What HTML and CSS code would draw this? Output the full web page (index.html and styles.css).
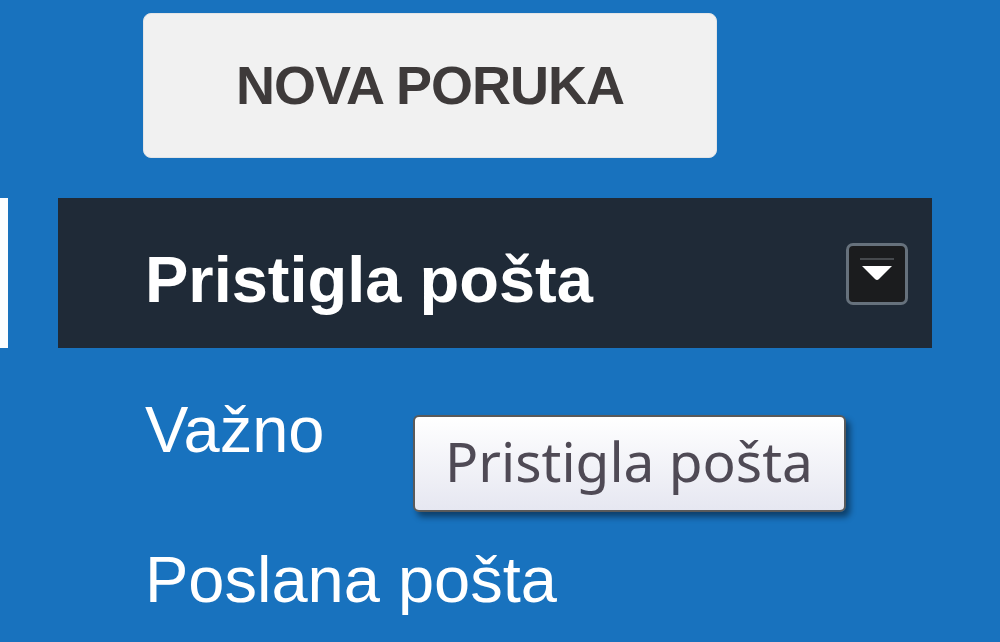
FILE: index.html
```html
<!DOCTYPE html>
<html lang="hr">
<head>
  <meta charset="UTF-8" />
  <title>Pošta</title>
  <link rel="stylesheet" href="styles.css">
</head>
<body>

  <div class="rail"></div>

  <div class="sidebar">
    <div class="compose">
      <button type="button" class="compose-btn">NOVA PORUKA</button>
    </div>

    <ul class="folders">
      <li class="folder active">
        <span class="folder-name">Pristigla pošta</span>
        <span class="folder-menu">
          <svg width="36" height="26" viewBox="0 0 36 26">
            <line x1="1" y1="2" x2="35" y2="2" stroke="#46494d" stroke-width="2" />
            <path d="M3 9 L33 9 L20 22 Q18 24 16 22 Z" fill="#fff" />
          </svg>
        </span>
      </li>
      <li class="folder">
        <span class="folder-name">Važno</span>
      </li>
      <li class="folder">
        <span class="folder-name">Poslana pošta</span>
      </li>
    </ul>

    <!-- hover tooltip over the inbox link -->
    <div class="tooltip">Pristigla pošta</div>
  </div>

</body>
</html>
```

FILE: styles.css
```css
html, body {
  margin: 0;
  height: 100%;
}
body {
  background: #1872be;
  font-family: "Liberation Sans", Arial, sans-serif;
  display: flex;
  align-items: flex-start;
  overflow: hidden;
}
.rail {
  width: 8px;
  height: 150px;
  margin-top: 198px;
  background: #fbfdff;
}
.sidebar {
  position: relative;
  margin-left: 50px;
  width: 874px;
}
.compose {
  padding: 13px 0 0 85px;
}
.compose-btn {
  width: 574px;
  height: 145px;
  background: #f1f1f1;
  border: 1px solid #e2e4e6;
  border-radius: 8px;
  font-family: "Liberation Sans", Arial, sans-serif;
  font-weight: bold;
  font-size: 54px;
  letter-spacing: -1px;
  color: #3e3a3a;
  padding: 0 0 2px;
}
.folders {
  list-style: none;
  margin: 40px 0 0;
  padding: 0;
}
.folder {
  height: 150px;
  box-sizing: border-box;
  padding: 14px 24px 0 87px;
  line-height: 136px;
  font-size: 65px;
  color: #ffffff;
  display: flex;
  justify-content: space-between;
}
.folder.active {
  background: #1f2a37;
  font-weight: bold;
}
.folder-menu {
  width: 56px;
  height: 45px;
  margin-top: 31px;
  padding-top: 11px;
  background: #1b1c1e;
  border: 3px solid #66717c;
  border-radius: 7px;
  display: flex;
  align-items: flex-start;
  justify-content: center;
}
.tooltip {
  position: absolute;
  left: 355px;
  top: 415px;
  width: 433px;
  height: 97px;
  box-sizing: border-box;
  padding: 0 0 6px 30px;
  display: flex;
  align-items: center;
  border: 2px solid #5a5a5a;
  border-radius: 6px;
  background: linear-gradient(#ffffff, #e6e7f1);
  box-shadow: 4px 5px 6px rgba(0, 0, 0, 0.45);
  font-family: "Noto Sans", sans-serif;
  font-size: 55px;
  color: #4f4a55;
}
```
